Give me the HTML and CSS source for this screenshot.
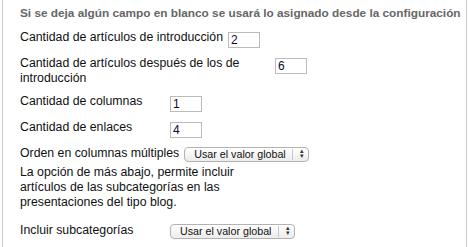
FILE: index.html
```html
<!DOCTYPE html>
<html lang="es">
<head>
    <meta charset="UTF-8">
    <title>Parámetros de blog</title>
    <link rel="stylesheet" href="styles.css">
</head>
<body>
    <div class="panel">
        <p class="note">Si se deja algún campo en blanco se usará lo asignado desde la configuración</p>

        <div class="row">
            <label for="num_leading">Cantidad de artículos de introducción</label>
            <input type="text" id="num_leading" class="num" value="2">
        </div>

        <div class="row">
            <label for="num_intro">Cantidad de artículos después de los de introducción</label>
            <input type="text" id="num_intro" class="num" value="6">
        </div>

        <div class="row">
            <label for="num_columns">Cantidad de columnas</label>
            <input type="text" id="num_columns" class="num" value="1">
        </div>

        <div class="row">
            <label for="num_links">Cantidad de enlaces</label>
            <input type="text" id="num_links" class="num" value="4">
        </div>

        <div class="row">
            <label for="multi_column_order">Orden en columnas múltiples</label>
            <span class="select">
                <select id="multi_column_order">
                    <option>Usar el valor global</option>
                </select>
            </span>
        </div>

        <p class="help">La opción de más abajo, permite incluir artículos de las subcategorías en las presentaciones del tipo blog.</p>

        <div class="row">
            <label for="show_subcategory">Incluir subcategorías</label>
            <span class="select">
                <select id="show_subcategory">
                    <option>Usar el valor global</option>
                </select>
            </span>
        </div>
    </div>
</body>
</html>
```

FILE: styles.css
```css
html, body {
    height: 100%;
}
body {
    margin: 0;
    font-family: "Liberation Sans", Arial, sans-serif;
    font-size: 12.3px;
    line-height: 15px;
    color: #111;
    background: #fff;
}
.panel {
    box-sizing: border-box;
    height: 100%;
    margin: 0 2px 0 2px;
    width: 465px;
    border-left: 1px solid #ccc;
    border-right: 1px solid #ccc;
    padding: 6px 0 0 17px;
}
.note {
    margin: 0 0 9px;
    font-size: 11.8px;
    font-weight: bold;
    white-space: nowrap;
    color: #666;
}
.row {
    display: flex;
    align-items: flex-start;
    margin-bottom: 8px;
}
.row label {
    min-width: 145px;
    max-width: 250px;
    margin-right: 5px;
}
.num {
    box-sizing: border-box;
    width: 32px;
    height: 16px;
    margin: 2px 0 0;
    padding: 0 2px;
    border: 1px solid #bbb;
    font-family: "Liberation Sans", Arial, sans-serif;
    font-size: 12px;
    color: #0a0a3a;
}
.select {
    position: relative;
    display: inline-block;
    margin-top: 1px;
}
.select select {
    -webkit-appearance: none;
    appearance: none;
    box-sizing: border-box;
    width: 125px;
    height: 15px;
    margin: 0;
    padding: 0 0 0 9px;
    border: 1px solid #b3b3b3;
    border-radius: 4px;
    background: linear-gradient(#ffffff, #ececec);
    font-family: "Liberation Sans", Arial, sans-serif;
    font-size: 10.7px;
    line-height: 13px;
    color: #111;
}
.select::after {
    content: "";
    position: absolute;
    top: 2px;
    right: 16px;
    width: 1px;
    height: 11px;
    background: #c8c8c8;
}
.select::before {
    content: "\25B4\A\25BE";
    white-space: pre;
    position: absolute;
    top: 1px;
    right: 5px;
    font-size: 7px;
    line-height: 5px;
    color: #333;
    pointer-events: none;
}
.help {
    width: 230px;
    margin: -5px 0 13px;
}
```
